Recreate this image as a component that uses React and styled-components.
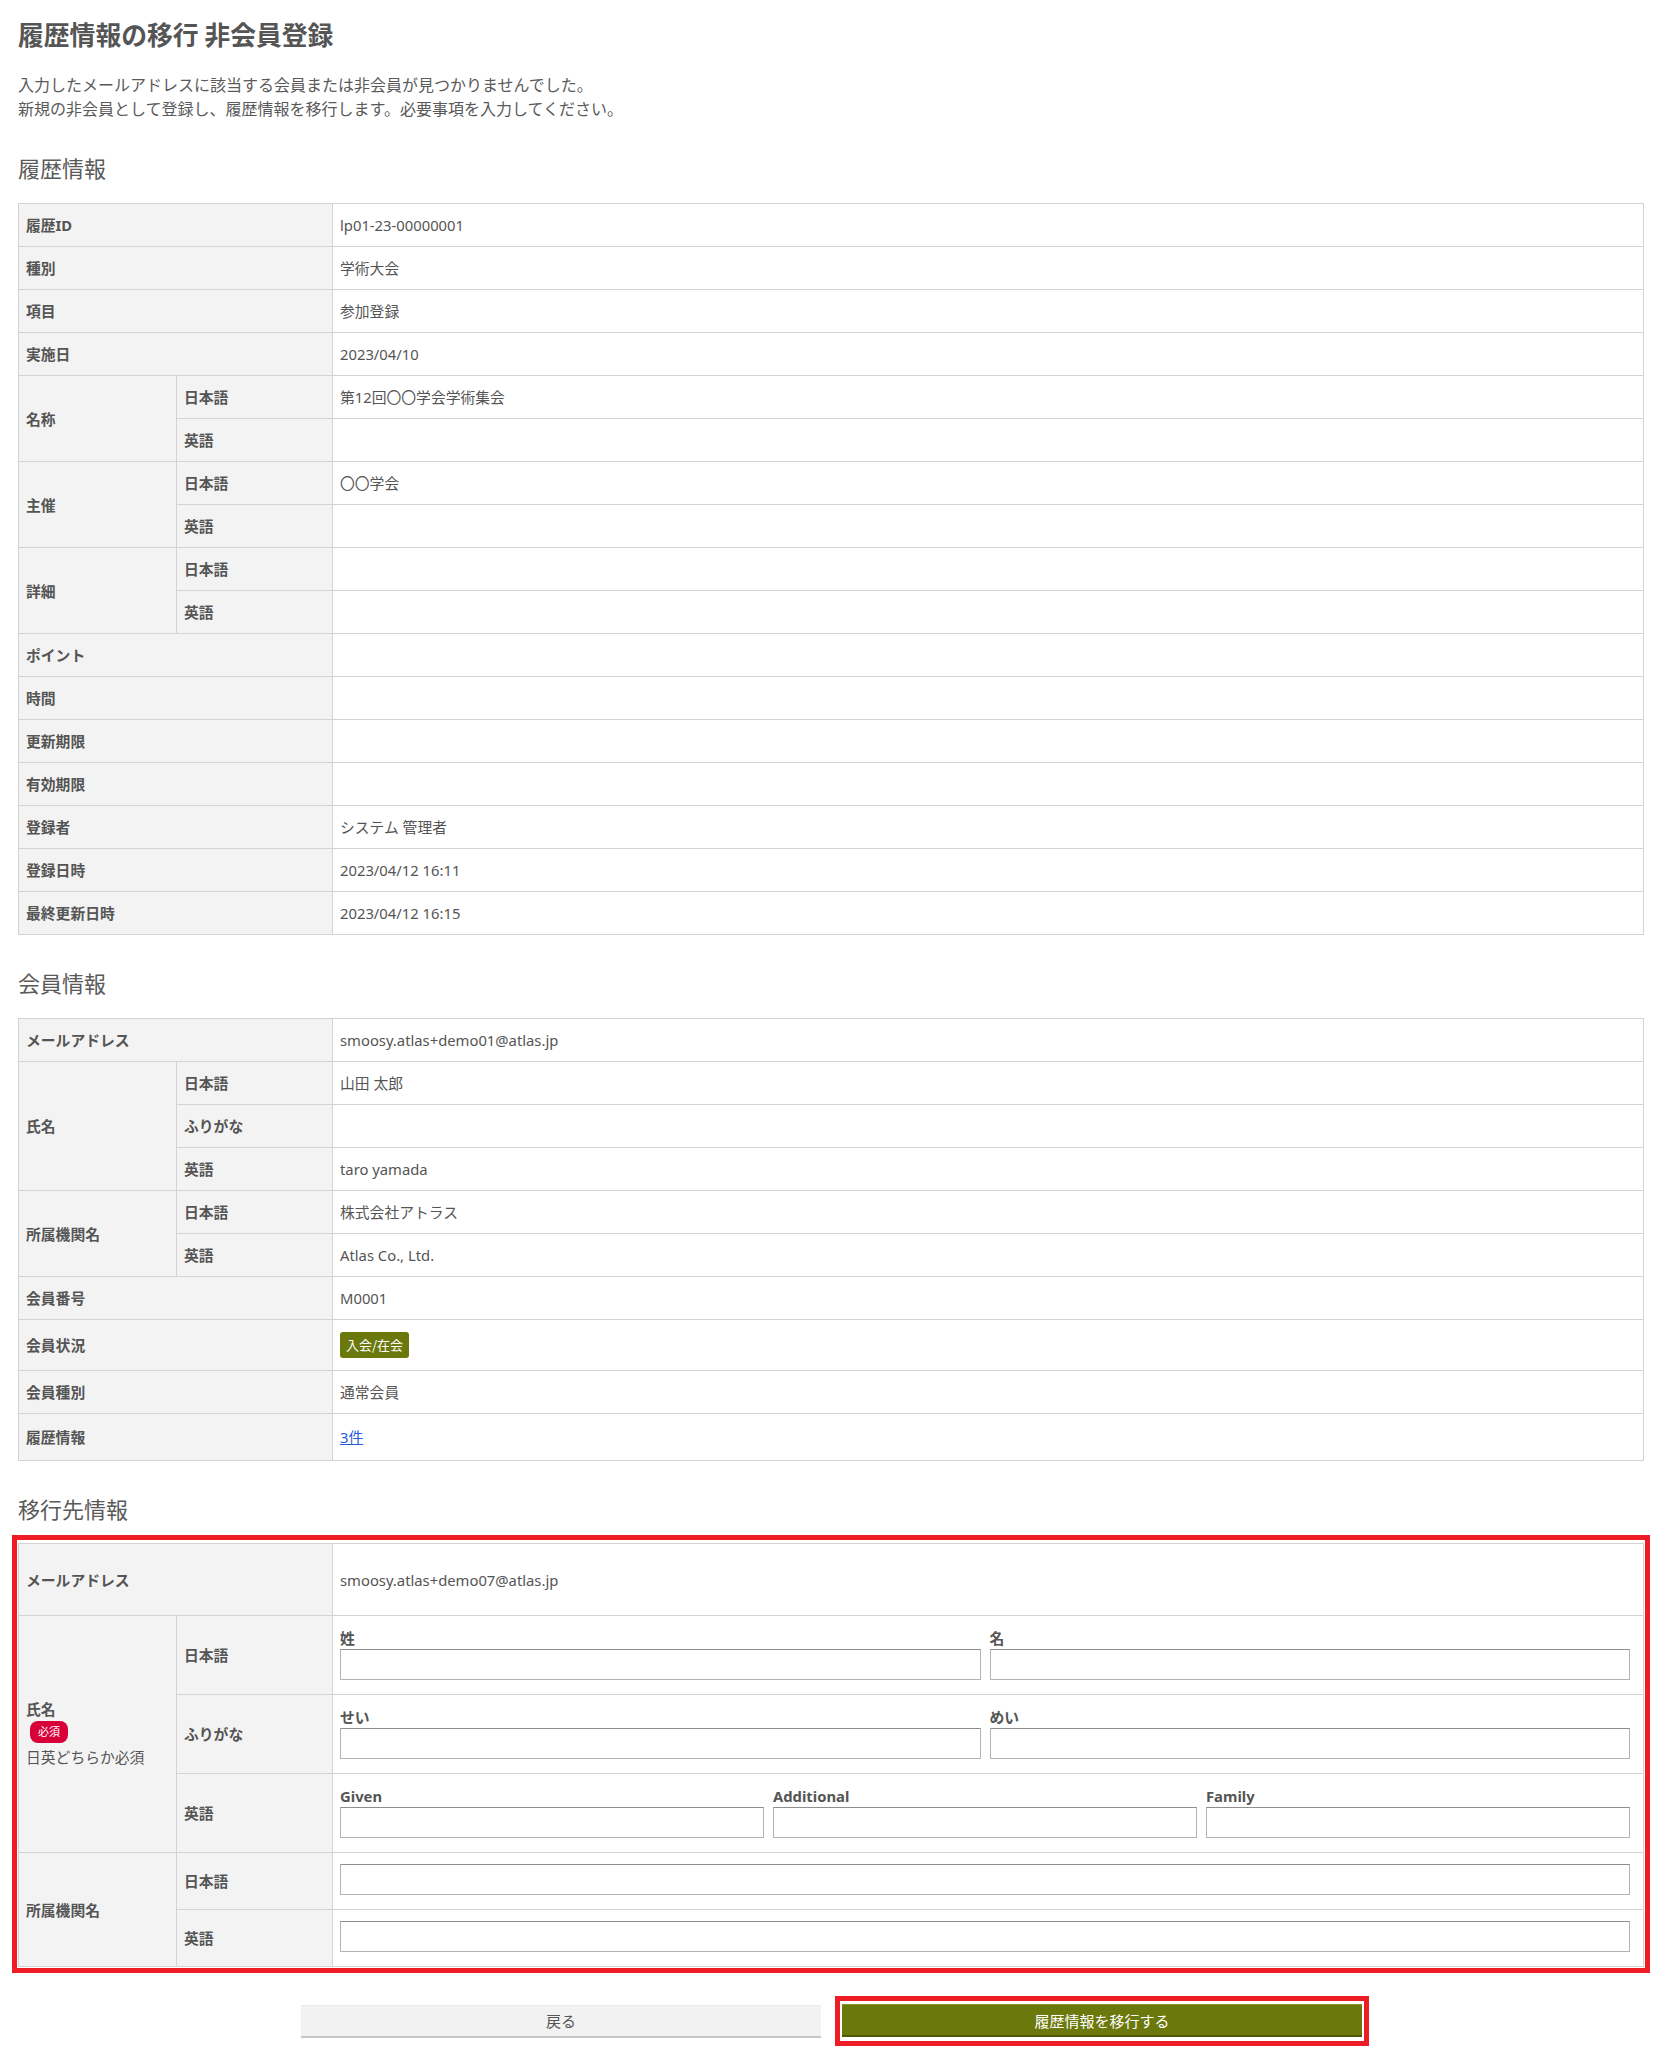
import React from "react";
import styled, { createGlobalStyle } from "styled-components";

const GlobalStyle = createGlobalStyle`
  body {
    margin: 0;
    background: #ffffff;
    color: #555555;
    font-family: "Noto Sans CJK JP", "Noto Sans", sans-serif;
  }
`;

const historyRows = [
  { label: "履歴ID", value: "lp01-23-00000001" },
  { label: "種別", value: "学術大会" },
  { label: "項目", value: "参加登録" },
  { label: "実施日", value: "2023/04/10" },
  { label: "名称", subs: [["日本語", "第12回〇〇学会学術集会"], ["英語", ""]] },
  { label: "主催", subs: [["日本語", "〇〇学会"], ["英語", ""]] },
  { label: "詳細", subs: [["日本語", ""], ["英語", ""]] },
  { label: "ポイント", value: "" },
  { label: "時間", value: "" },
  { label: "更新期限", value: "" },
  { label: "有効期限", value: "" },
  { label: "登録者", value: "システム 管理者" },
  { label: "登録日時", value: "2023/04/12 16:11" },
  { label: "最終更新日時", value: "2023/04/12 16:15" },
];

const memberRows = [
  { label: "メールアドレス", value: "smoosy.atlas+demo01@atlas.jp" },
  {
    label: "氏名",
    subs: [["日本語", "山田 太郎"], ["ふりがな", ""], ["英語", "taro yamada"]],
  },
  { label: "所属機関名", subs: [["日本語", "株式会社アトラス"], ["英語", "Atlas Co., Ltd."]] },
  { label: "会員番号", value: "M0001" },
];

const App = () => {
  const renderRows = (rows) =>
    rows.map((row) => {
      if (!row.subs) {
        return (
          <tr key={row.label}>
            <Th colSpan={2}>{row.label}</Th>
            <Td>{row.value}</Td>
          </tr>
        );
      }
      return row.subs.map(([sub, value], i) => (
        <tr key={row.label + sub}>
          {i === 0 && <Th rowSpan={row.subs.length}>{row.label}</Th>}
          <Th>{sub}</Th>
          <Td>{value}</Td>
        </tr>
      ));
    });

  return (
    <Page>
      <GlobalStyle />
      <Title>履歴情報の移行 非会員登録</Title>
      <Lead>
        入力したメールアドレスに該当する会員または非会員が見つかりませんでした。
        <br />
        新規の非会員として登録し、履歴情報を移行します。必要事項を入力してください。
      </Lead>

      <SectionTitle>履歴情報</SectionTitle>
      <InfoTable>
        <Cols />
        <tbody>{renderRows(historyRows)}</tbody>
      </InfoTable>

      <SectionTitle>会員情報</SectionTitle>
      <InfoTable>
        <Cols />
        <tbody>
          {renderRows(memberRows)}
          <tr>
            <Th colSpan={2}>会員状況</Th>
            <Td h={50}>
              <StatusBadge>入会/在会</StatusBadge>
            </Td>
          </tr>
          <tr>
            <Th colSpan={2}>会員種別</Th>
            <Td>通常会員</Td>
          </tr>
          <tr>
            <Th colSpan={2}>履歴情報</Th>
            <Td h={46}>
              <Link href="#">3件</Link>
            </Td>
          </tr>
        </tbody>
      </InfoTable>

      <SectionTitle>移行先情報</SectionTitle>
      <Highlight>
        <InfoTable>
          <Cols />
          <tbody>
            <tr>
              <Th colSpan={2}>メールアドレス</Th>
              <Td h={71}>smoosy.atlas+demo07@atlas.jp</Td>
            </tr>
            <tr>
              <Th rowSpan={3}>
                <div>氏名</div>
                <Required>必須</Required>
                <Note>日英どちらか必須</Note>
              </Th>
              <Th>日本語</Th>
              <FormTd>
                <Fields cols={2}>
                  <Field>
                    <FieldLabel>姓</FieldLabel>
                    <Input />
                  </Field>
                  <Field>
                    <FieldLabel>名</FieldLabel>
                    <Input />
                  </Field>
                </Fields>
              </FormTd>
            </tr>
            <tr>
              <Th>ふりがな</Th>
              <FormTd>
                <Fields cols={2}>
                  <Field>
                    <FieldLabel>せい</FieldLabel>
                    <Input />
                  </Field>
                  <Field>
                    <FieldLabel>めい</FieldLabel>
                    <Input />
                  </Field>
                </Fields>
              </FormTd>
            </tr>
            <tr>
              <Th>英語</Th>
              <FormTd>
                <Fields cols={3}>
                  <Field>
                    <FieldLabel>Given</FieldLabel>
                    <Input />
                  </Field>
                  <Field>
                    <FieldLabel>Additional</FieldLabel>
                    <Input />
                  </Field>
                  <Field>
                    <FieldLabel>Family</FieldLabel>
                    <Input />
                  </Field>
                </Fields>
              </FormTd>
            </tr>
            <tr>
              <Th rowSpan={2}>所属機関名</Th>
              <Th>日本語</Th>
              <FormTd>
                <Input />
              </FormTd>
            </tr>
            <tr>
              <Th>英語</Th>
              <FormTd>
                <Input />
              </FormTd>
            </tr>
          </tbody>
        </InfoTable>
      </Highlight>

      <Buttons>
        <BackButton type="button">戻る</BackButton>
        <SubmitFrame>
          <SubmitButton type="button">履歴情報を移行する</SubmitButton>
        </SubmitFrame>
      </Buttons>
    </Page>
  );
};

const Cols = () => (
  <colgroup>
    <col style={{ width: 158 }} />
    <col style={{ width: 156 }} />
    <col />
  </colgroup>
);

export default App;

const Page = styled.div`
  padding: 18px 28px 21px 18px;
`;

const Title = styled.h1`
  margin: 0;
  font-size: 25.8px;
  line-height: 32px;
  font-weight: 700;
  color: #555555;
`;

const Lead = styled.p`
  margin: 22px 0 0;
  font-size: 16px;
  line-height: 24px;
  color: #5a5a5a;
`;

const SectionTitle = styled.h2`
  margin: 32px 0 21px;
  font-size: 22px;
  line-height: 30px;
  font-weight: 400;
  color: #5a5a5a;
`;

const InfoTable = styled.table`
  width: 100%;
  border-collapse: collapse;
  table-layout: fixed;
  font-family: "Noto Sans", "Noto Sans CJK JP", sans-serif;
  font-size: 14.8px;
  line-height: 20px;
  color: #555555;
`;

const Th = styled.th`
  height: 42px;
  padding: 0 7px;
  background: #f3f3f3;
  border: 1px solid #d3d3d3;
  text-align: left;
  vertical-align: middle;
  font-weight: 700;
`;

const Td = styled.td`
  height: ${(props) => props.h || 42}px;
  padding: 0 7px;
  border: 1px solid #d3d3d3;
  background: #ffffff;
  vertical-align: middle;
`;

const FormTd = styled.td`
  padding: 11px 13px 14px 7px;
  border: 1px solid #d3d3d3;
  background: #ffffff;
  vertical-align: middle;
`;

const StatusBadge = styled.span`
  display: inline-block;
  height: 26px;
  padding: 0 6px;
  border-radius: 3px;
  background: #6b780b;
  color: #ffffff;
  font-family: "Noto Sans CJK JP", sans-serif;
  font-size: 13px;
  line-height: 26px;
`;

const Link = styled.a`
  color: #2a5bd7;
  text-decoration: underline;
`;

const Highlight = styled.div`
  margin: -9px -6px 0 -6px;
  padding: 3px 1px 1px 1px;
  border: 5px solid #ee1c25;
`;

const Required = styled.span`
  display: inline-block;
  margin: 2px 0 2px 4px;
  height: 22px;
  padding: 0 8px;
  border-radius: 8px;
  background: #d9003a;
  color: #ffffff;
  font-size: 11px;
  line-height: 22px;
  font-weight: 400;
`;

const Note = styled.div`
  font-weight: 400;
  line-height: 24px;
`;

const Fields = styled.div`
  display: grid;
  grid-template-columns: repeat(${(props) => props.cols}, 1fr);
  column-gap: 9px;
`;

const Field = styled.div`
  display: flex;
  flex-direction: column;
`;

const FieldLabel = styled.span`
  font-weight: 700;
  line-height: 22px;
`;

const Input = styled.input`
  display: block;
  box-sizing: border-box;
  width: 100%;
  height: 31px;
  margin: 0;
  padding: 0 6px;
  border: 1px solid #b4b4b4;
  border-top-color: #8e8e8e;
  border-radius: 0;
  background: #ffffff;
  font-family: inherit;
  font-size: 15px;
`;

const Buttons = styled.div`
  display: flex;
  justify-content: center;
  align-items: center;
  gap: 14px;
  margin-top: 23px;
  padding-left: 8px;
`;

const BackButton = styled.button`
  width: 520px;
  height: 33px;
  border: none;
  border-top: 1px solid #ebebeb;
  border-bottom: 2px solid #c6c6c6;
  background: #f2f2f2;
  color: #555555;
  font-family: inherit;
  font-size: 15px;
  cursor: pointer;
`;

const SubmitFrame = styled.div`
  padding: 3px 2px 4px 2px;
  border: 5px solid #ee1c25;
`;

const SubmitButton = styled.button`
  display: block;
  width: 520px;
  height: 33px;
  border: none;
  border-top: 1px solid #8a9526;
  border-bottom: 2px solid #4f5806;
  background: #6b780b;
  color: #ffffff;
  font-family: inherit;
  font-size: 15px;
  cursor: pointer;
`;
